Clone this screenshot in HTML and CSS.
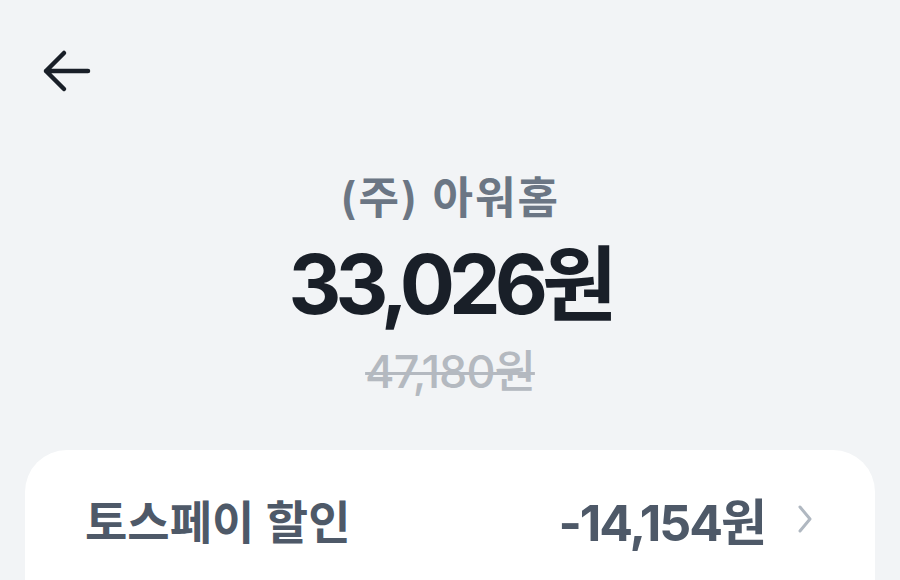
FILE: index.html
```html
<!DOCTYPE html>
<html lang="ko">
<head>
    <meta charset="UTF-8">
    <meta name="viewport" content="width=device-width, initial-scale=1.0">
    <title>결제</title>
    <link rel="stylesheet" href="styles.css">
</head>
<body>
    <div class="screen">
        <header class="top-bar">
            <button class="back-btn" type="button" aria-label="뒤로">
                <svg width="52" height="44" viewBox="0 0 52 44" fill="none">
                    <path d="M24 4 L6 22 L24 40 M6 22 H48" stroke="#191f28" stroke-width="4.5" stroke-linecap="round" stroke-linejoin="round"/>
                </svg>
            </button>
        </header>

        <section class="summary">
            <div class="merchant">(주) 아워홈</div>
            <div class="amount">33,026원</div>
            <div class="original">47,180원</div>
        </section>

        <div class="card">
            <div class="row">
                <span class="row-label">토스페이 할인</span>
                <span class="row-value">-14,154원</span>
                <svg class="chevron" width="16" height="30" viewBox="0 0 16 30" fill="none">
                    <path d="M3 3 L13 15 L3 27" stroke="#b0b8c1" stroke-width="3" stroke-linecap="round" stroke-linejoin="round"/>
                </svg>
            </div>
        </div>
    </div>
</body>
</html>
```

FILE: styles.css
```css
body {
    margin: 0;
    padding: 0;
    background-color: #f2f4f6;
    font-family: Inter, "Noto Sans CJK KR", sans-serif;
    color: #191f28;
    overflow: hidden;
}
.screen {
    width: 900px;
    height: 580px;
    overflow: hidden;
}
.top-bar {
    padding: 49px 0 0 40px;
    height: 45px;
}
.back-btn {
    background: none;
    border: none;
    padding: 0;
    cursor: pointer;
    display: block;
}
.summary {
    display: flex;
    flex-direction: column;
    align-items: center;
    margin-top: 76px;
}
.merchant {
    font-size: 44px;
    font-weight: 600;
    color: #6b7684;
    line-height: 56px;
    letter-spacing: 2px;
}
.amount {
    font-size: 82px;
    font-weight: 700;
    line-height: 90px;
    letter-spacing: -6px;
    margin-top: 14px;
}
.original {
    font-size: 45px;
    font-weight: 500;
    color: #b4b9c0;
    text-decoration: line-through;
    text-decoration-thickness: 3px;
    line-height: 50px;
    letter-spacing: -1px;
    margin-top: 17px;
}
.card {
    margin: 53px 25px 0;
    background-color: #fff;
    border-radius: 42px;
    height: 180px;
}
.row {
    display: flex;
    align-items: center;
    padding: 33px 62px 0 60px;
}
.row-label {
    font-size: 46px;
    font-weight: 600;
    color: #4e5968;
}
.row-value {
    margin-left: auto;
    font-size: 50px;
    font-weight: 700;
    color: #4e5968;
    letter-spacing: -2px;
}
.chevron {
    margin-left: 32px;
}
```
